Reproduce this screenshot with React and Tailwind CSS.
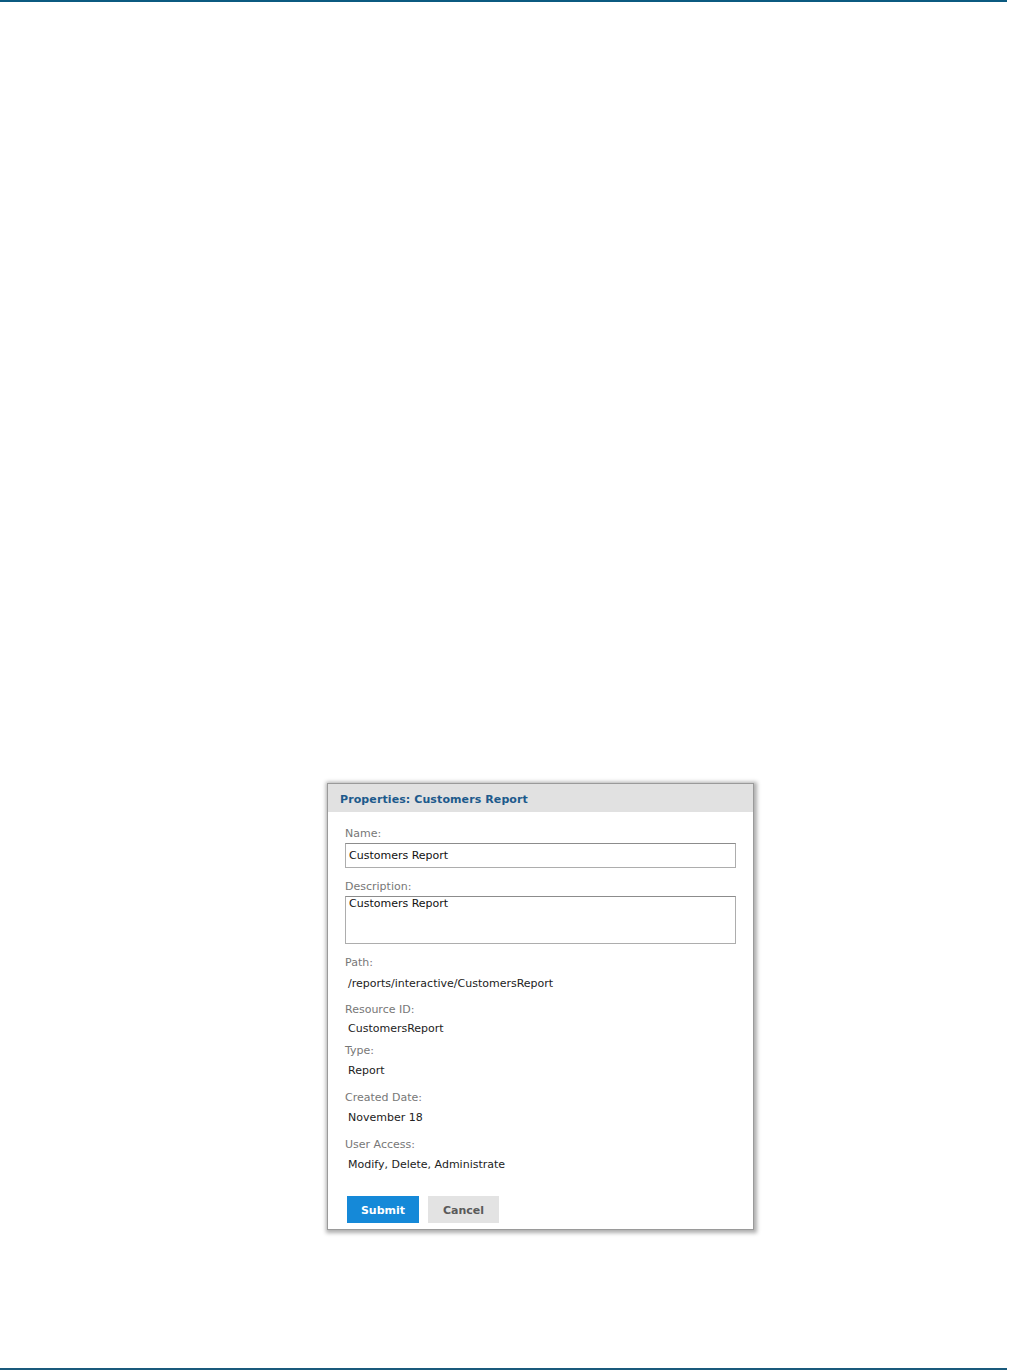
import React from 'react';

const fields = [
  { label: 'Path:', value: '/reports/interactive/CustomersReport', labelGap: 'mt-[12px]', valueGap: 'mt-[7px]' },
  { label: 'Resource ID:', value: 'CustomersReport', labelGap: 'mt-[12px]', valueGap: 'mt-[5px]' },
  { label: 'Type:', value: 'Report', labelGap: 'mt-[8px]', valueGap: 'mt-[6px]' },
  { label: 'Created Date:', value: 'November 18', labelGap: 'mt-[13px]', valueGap: 'mt-[6px]' },
  { label: 'User Access:', value: 'Modify, Delete, Administrate', labelGap: 'mt-[13px]', valueGap: 'mt-[6px]' },
];

const App = () => {
  return (
    <div className="relative w-full h-[1370px] bg-white overflow-hidden font-['DejaVu_Sans',Verdana,sans-serif]">
      {/* page rules */}
      <div className="h-[2px] w-[1007px] bg-[#0b5a80]"></div>

      {/* properties dialog */}
      <div className="ml-[327px] mt-[781px] w-[427px] bg-white border border-[#9a9a9a] shadow-[1px_1px_4px_2px_rgba(0,0,0,0.32)]">
        <div className="h-[28px] bg-[#e1e1e1] pl-[12px] pt-[4px] flex items-center">
          <span className="text-[11px] font-bold text-[#1d5a8c] tracking-[0.1px]">Properties: Customers Report</span>
        </div>

        <div className="px-[17px] pt-[15px] pb-[6px]">
          <div className="text-[11px] leading-[14px] text-[#777]">Name:</div>
          <input
            defaultValue="Customers Report"
            className="mt-[2px] block w-full h-[25px] px-[3px] text-[11px] text-[#111] border border-[#adadad] border-t-[#8c8c8c] outline-none"
          />

          <div className="mt-[12px] text-[11px] leading-[14px] text-[#777]">Description:</div>
          <textarea
            defaultValue="Customers Report"
            className="mt-[2px] block w-full h-[48px] px-[3px] py-0 text-[11px] leading-[14px] text-[#111] border border-[#adadad] border-t-[#8c8c8c] outline-none resize-none"
          />

          {fields.map((f) => (
            <div key={f.label}>
              <div className={`${f.labelGap} text-[11px] leading-[14px] text-[#777]`}>{f.label}</div>
              <div className={`${f.valueGap} pl-[3px] text-[11px] leading-[14px] text-[#222]`}>{f.value}</div>
            </div>
          ))}

          <div className="mt-[24px] flex gap-[9px] pl-[2px]">
            <button className="w-[72px] h-[27px] pt-[3px] bg-[#1589d8] text-white text-[11px] font-bold">Submit</button>
            <button className="w-[71px] h-[27px] pt-[3px] bg-[#e3e3e3] text-[#5a5a5a] text-[11px] font-bold">Cancel</button>
          </div>
        </div>
      </div>

      <div className="absolute left-0 bottom-0 h-[2px] w-[1007px] bg-[#1a5a7c]"></div>
    </div>
  );
};

export default App;
